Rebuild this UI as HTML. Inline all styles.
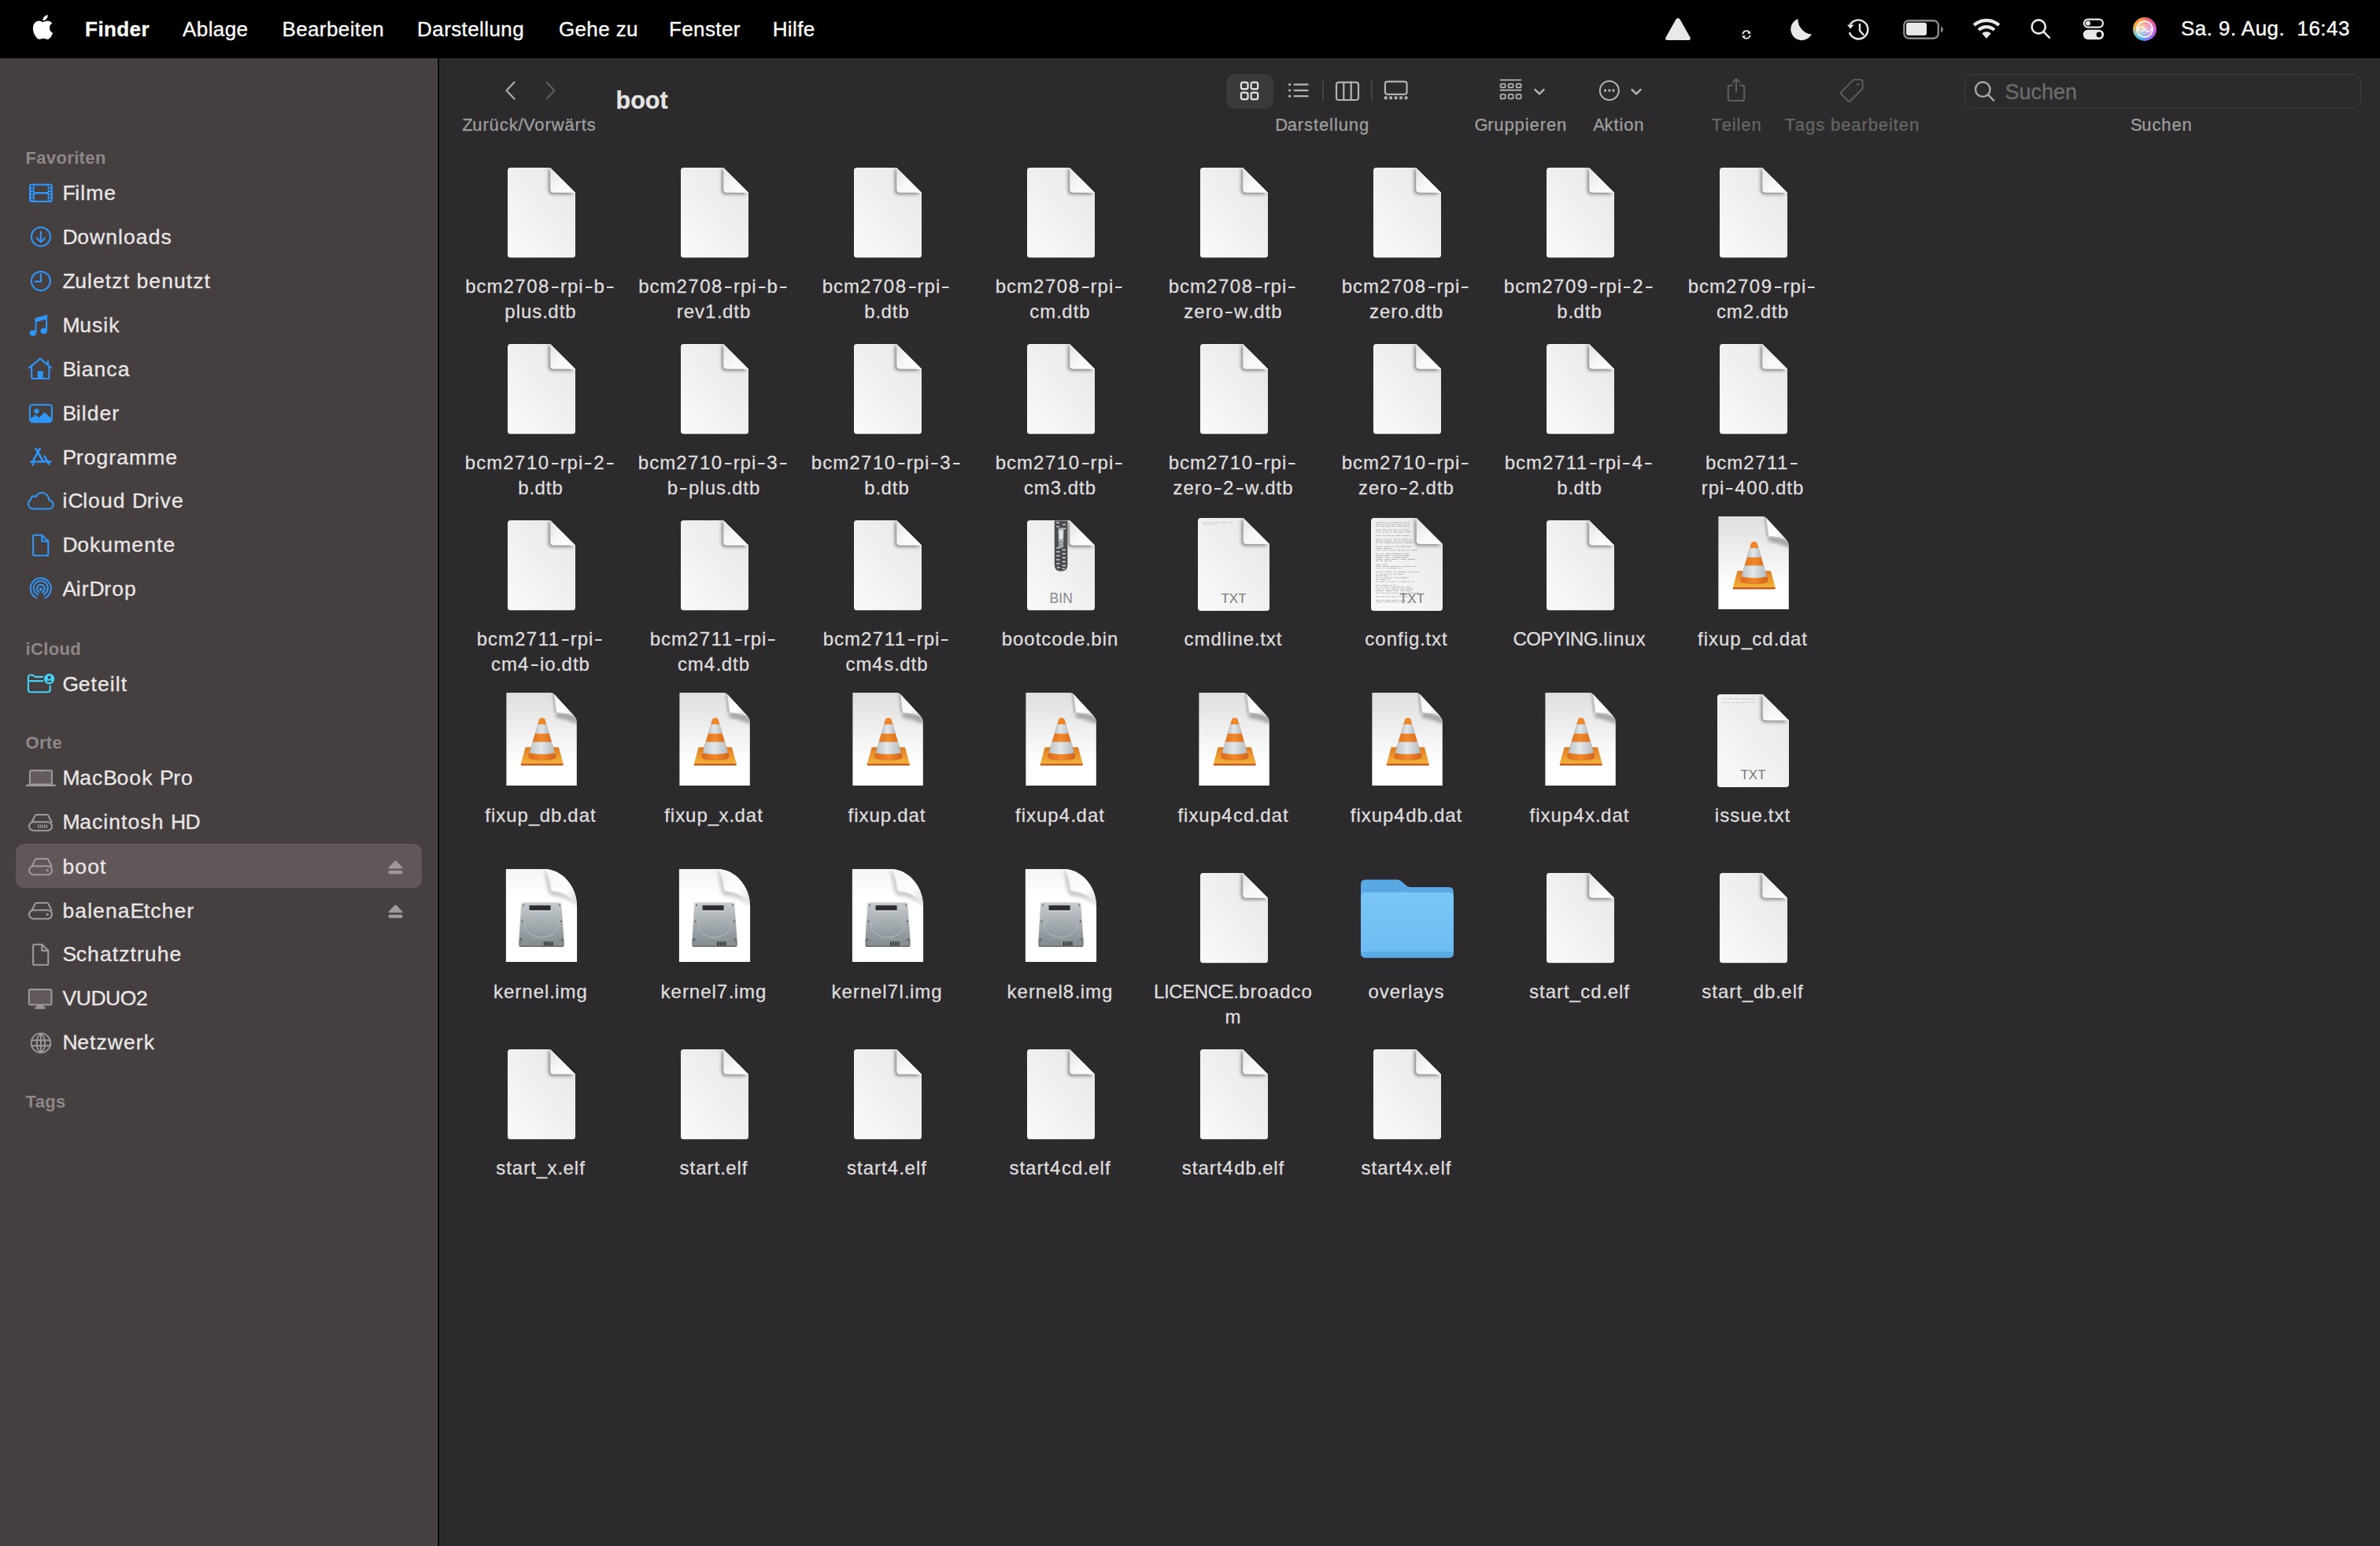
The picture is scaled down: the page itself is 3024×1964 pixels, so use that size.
<!DOCTYPE html>
<html><head><meta charset="utf-8"><title>Finder</title>
<style>
html,body{margin:0;padding:0}
body{width:3024px;height:1964px;overflow:hidden;position:relative;background:#2d2a2d;font-family:"Liberation Sans",sans-serif}
.t{position:absolute;white-space:nowrap;line-height:1;-webkit-text-stroke:0.3px currentColor}
.i{position:absolute;overflow:visible}
.hy{display:inline-block;width:13px;height:12px;vertical-align:baseline;background:linear-gradient(currentColor,currentColor) no-repeat;background-size:8.6px 2.3px;background-position:2.1px 4.1px}
</style></head><body>
<div style="position:absolute;left:0;top:0;width:3024px;height:74px;background:#000"></div>
<svg class="i" style="left:39px;top:19px;" width="31" height="31" viewBox="0 0 24 24"><path fill="#fff" d="M12.152 6.896c-.948 0-2.415-1.078-3.96-1.04-2.04.027-3.91 1.183-4.961 3.014-2.117 3.675-.546 9.103 1.519 12.09 1.013 1.454 2.208 3.09 3.792 3.039 1.52-.065 2.09-.987 3.935-.987 1.831 0 2.35.987 3.96.948 1.637-.026 2.676-1.48 3.676-2.948 1.156-1.688 1.636-3.325 1.662-3.415-.039-.013-3.182-1.221-3.22-4.857-.026-3.04 2.48-4.494 2.597-4.559-1.429-2.09-3.623-2.324-4.39-2.376-2-.156-3.675 1.09-4.61 1.09zM15.53 3.83c.843-1.012 1.4-2.427 1.245-3.83-1.207.052-2.662.805-3.532 1.818-.78.896-1.454 2.338-1.273 3.714 1.338.104 2.715-.688 3.559-1.701"/></svg>
<div class="t" style="left:108.1px;top:23.7px;font-size:26px;color:#ffffff;font-weight:700;letter-spacing:0.4px;">Finder</div>
<div class="t" style="left:232.1px;top:23.7px;font-size:26px;color:#ffffff;letter-spacing:0.4px;">Ablage</div>
<div class="t" style="left:358.4px;top:23.7px;font-size:26px;color:#ffffff;letter-spacing:0.4px;">Bearbeiten</div>
<div class="t" style="left:530.1px;top:23.7px;font-size:26px;color:#ffffff;letter-spacing:0.4px;">Darstellung</div>
<div class="t" style="left:709.9px;top:23.7px;font-size:26px;color:#ffffff;letter-spacing:0.4px;">Gehe zu</div>
<div class="t" style="left:849.9px;top:23.7px;font-size:26px;color:#ffffff;letter-spacing:0.4px;">Fenster</div>
<div class="t" style="left:981.7px;top:23.7px;font-size:26px;color:#ffffff;letter-spacing:0.4px;">Hilfe</div>
<svg class="i" style="left:2112px;top:20px;" width="40" height="34" viewBox="0 0 40 34"><path fill="#e8e8e8" d="M20 3 Q21.5 3 22.5 4.6 L35.5 27.5 Q36.8 30.8 33.5 31 L6.5 31 Q3.2 30.8 4.5 27.5 L17.5 4.6 Q18.5 3 20 3Z"/></svg>
<svg class="i" style="left:2212px;top:37px;" width="14" height="14" viewBox="0 0 14 14"><g fill="none" stroke="#e8e8e8" stroke-width="1.8"><path d="M2.2 6.5 A5 5 0 0 1 11 4"/><path d="M11.8 7.5 A5 5 0 0 1 3 10"/></g><path fill="#e8e8e8" d="M9.5 1.5 L13 5.5 L8.5 6Z M4.5 12.5 L1 8.5 L5.5 8Z"/></svg>
<svg class="i" style="left:2272px;top:22px;" width="32" height="32" viewBox="0 0 32 32"><path fill="#e8e8e8" d="M12.5 2 A14 14 0 1 0 29.8 21.5 A19 19 0 0 1 12.5 2Z"/></svg>
<svg class="i" style="left:2345px;top:22px;" width="34" height="32" viewBox="0 0 34 32"><g fill="none" stroke="#e8e8e8" stroke-width="2.4" stroke-linecap="round"><path d="M5.6 10 A12 12 0 1 1 5.2 20"/><path d="M18 9 V17 L22.5 22"/></g><path fill="#e8e8e8" d="M2 9.5 L10.5 9.5 L6.2 14.5Z"/></svg>
<svg class="i" style="left:2416px;top:23px;" width="56" height="28" viewBox="0 0 56 28"><rect x="3.3" y="3.2" width="43.5" height="22.5" rx="6" fill="none" stroke="#8a8a8a" stroke-width="2.4"/><rect x="6" y="5.8" width="26" height="16.2" rx="3" fill="#e8e8e8"/><path d="M50 10.5 Q53 12 53 14.5 Q53 17 50 18.5Z" fill="#8a8a8a"/></svg>
<svg class="i" style="left:2504px;top:22px;" width="40" height="30" viewBox="0 0 40 30"><g fill="#e8e8e8"><path d="M20 1.8 C27 1.8 33 4.6 37.3 8.6 L34.4 11.6 C30.7 8.2 25.6 6 20 6 C14.4 6 9.3 8.2 5.6 11.6 L2.7 8.6 C7 4.6 13 1.8 20 1.8Z"/><path d="M20 10 C24.6 10 28.6 11.8 31.4 14.6 L28.5 17.6 C26.3 15.5 23.3 14.2 20 14.2 C16.7 14.2 13.7 15.5 11.5 17.6 L8.6 14.6 C11.4 11.8 15.4 10 20 10Z"/><path d="M20 18.2 C22.3 18.2 24.2 19.1 25.6 20.5 L20 27 L14.4 20.5 C15.8 19.1 17.7 18.2 20 18.2Z"/></g></svg>
<svg class="i" style="left:2578px;top:22px;" width="30" height="29" viewBox="0 0 30 29"><g fill="none" stroke="#e8e8e8" stroke-width="2.6" stroke-linecap="round"><circle cx="12.2" cy="12" r="8.6"/><path d="M18.6 18.4 L26 25.8"/></g></svg>
<svg class="i" style="left:2645px;top:22px;" width="30" height="30" viewBox="0 0 30 30"><rect x="3" y="2.6" width="24" height="10" rx="5" fill="none" stroke="#e8e8e8" stroke-width="2.2"/><circle cx="8" cy="7.6" r="3" fill="#e8e8e8"/><rect x="1.8" y="15.8" width="26.4" height="12.4" rx="6.2" fill="#e8e8e8"/><circle cx="22" cy="22" r="3.4" fill="#000"/></svg>
<div style="position:absolute;left:2709.8px;top:21.8px;width:30.2px;height:30.2px;border-radius:50%;background:conic-gradient(from 20deg,#ee5d74,#d65ad6 70deg,#8a6cf0 130deg,#3db3f3 185deg,#7fc8c8 220deg,#f2ac3c 270deg,#f39a4a 320deg,#ee5d74)"></div>
<svg class="i" style="left:2709.8px;top:21.8px;" width="30.2" height="30.2" viewBox="0 0 30.2 30.2"><defs><radialGradient id="sg2" cx="0.5" cy="0.5" r="0.5"><stop offset="0" stop-color="#fbe9e6" stop-opacity="0.75"/><stop offset="0.7" stop-color="#f6d8d8" stop-opacity="0.45"/><stop offset="1" stop-color="#fff" stop-opacity="0"/></radialGradient></defs><circle cx="15.1" cy="15.1" r="12.5" fill="url(#sg2)"/><circle cx="15.1" cy="15.1" r="10" fill="none" stroke="#fff" stroke-width="1.5"/><path d="M5.6 16.5 C9 10.5 12 11 15.1 15.1 C18.2 19.2 21.2 19.7 24.6 13.5" fill="none" stroke="#fff" stroke-width="1.5"/><path d="M5.6 14 C9 19 12 18.5 15.1 15.1" fill="none" stroke="#fff" stroke-width="1.1" opacity=".8"/></svg>
<div class="t" style="left:2771.0px;top:23.2px;font-size:26px;color:#ffffff;letter-spacing:0.45px;">Sa. 9. Aug.&nbsp;&nbsp;16:43</div>
<div style="position:absolute;left:0;top:74px;width:556px;height:1890px;background:#463f40"></div>
<div style="position:absolute;left:555px;top:74px;width:1px;height:1890px;background:#4e4748"></div>
<div style="position:absolute;left:556px;top:74px;width:2px;height:1890px;background:#000"></div>
<div style="position:absolute;left:20px;top:1072px;width:516px;height:56px;border-radius:10px;background:#615758"></div>
<div class="t" style="left:32.5px;top:189.6px;font-size:22px;color:#8e8788;font-weight:700;letter-spacing:0.35px;-webkit-text-stroke:0;">Favoriten</div>
<div class="t" style="left:32.5px;top:813.8px;font-size:22px;color:#8e8788;font-weight:700;letter-spacing:0.35px;-webkit-text-stroke:0;">iCloud</div>
<div class="t" style="left:32.5px;top:933.3px;font-size:22px;color:#8e8788;font-weight:700;letter-spacing:0.35px;-webkit-text-stroke:0;">Orte</div>
<div class="t" style="left:32.5px;top:1388.9px;font-size:22px;color:#8e8788;font-weight:700;letter-spacing:0.35px;-webkit-text-stroke:0;">Tags</div>
<div class="t" style="left:79.5px;top:232.0px;font-size:26.5px;color:#e9e7e7;"><span style="letter-spacing:-0.45px">F</span><span style="letter-spacing:1.08px">ilm</span><span style="letter-spacing:0.0px">e</span></div>
<div class="t" style="left:79.5px;top:287.8px;font-size:26.5px;color:#e9e7e7;"><span style="letter-spacing:-0.45px">D</span><span style="letter-spacing:1.08px">ownload</span><span style="letter-spacing:0.0px">s</span></div>
<div class="t" style="left:79.5px;top:343.6px;font-size:26.5px;color:#e9e7e7;"><span style="letter-spacing:-0.45px">Z</span><span style="letter-spacing:1.08px">uletzt benutz</span><span style="letter-spacing:0.0px">t</span></div>
<div class="t" style="left:79.5px;top:399.6px;font-size:26.5px;color:#e9e7e7;"><span style="letter-spacing:-0.45px">M</span><span style="letter-spacing:1.08px">usi</span><span style="letter-spacing:0.0px">k</span></div>
<div class="t" style="left:79.5px;top:456.0px;font-size:26.5px;color:#e9e7e7;"><span style="letter-spacing:-0.45px">B</span><span style="letter-spacing:1.08px">ianc</span><span style="letter-spacing:0.0px">a</span></div>
<div class="t" style="left:79.5px;top:511.8px;font-size:26.5px;color:#e9e7e7;"><span style="letter-spacing:-0.45px">B</span><span style="letter-spacing:1.08px">ilde</span><span style="letter-spacing:0.0px">r</span></div>
<div class="t" style="left:79.5px;top:567.8px;font-size:26.5px;color:#e9e7e7;"><span style="letter-spacing:-0.45px">P</span><span style="letter-spacing:1.08px">rogramm</span><span style="letter-spacing:0.0px">e</span></div>
<div class="t" style="left:79.5px;top:623.4px;font-size:26.5px;color:#e9e7e7;"><span style="letter-spacing:1.08px">i</span><span style="letter-spacing:-0.45px">C</span><span style="letter-spacing:1.08px">loud </span><span style="letter-spacing:-0.45px">D</span><span style="letter-spacing:1.08px">riv</span><span style="letter-spacing:0.0px">e</span></div>
<div class="t" style="left:79.5px;top:679.4px;font-size:26.5px;color:#e9e7e7;"><span style="letter-spacing:-0.45px">D</span><span style="letter-spacing:1.08px">okument</span><span style="letter-spacing:0.0px">e</span></div>
<div class="t" style="left:79.5px;top:735.4px;font-size:26.5px;color:#e9e7e7;"><span style="letter-spacing:-0.45px">A</span><span style="letter-spacing:1.08px">ir</span><span style="letter-spacing:-0.45px">D</span><span style="letter-spacing:1.08px">ro</span><span style="letter-spacing:0.0px">p</span></div>
<div class="t" style="left:79.5px;top:855.8px;font-size:26.5px;color:#e9e7e7;"><span style="letter-spacing:-0.45px">G</span><span style="letter-spacing:1.08px">eteil</span><span style="letter-spacing:0.0px">t</span></div>
<div class="t" style="left:79.5px;top:975.4px;font-size:26.5px;color:#e9e7e7;"><span style="letter-spacing:-0.45px">M</span><span style="letter-spacing:1.08px">ac</span><span style="letter-spacing:-0.45px">B</span><span style="letter-spacing:1.08px">ook </span><span style="letter-spacing:-0.45px">P</span><span style="letter-spacing:1.08px">r</span><span style="letter-spacing:0.0px">o</span></div>
<div class="t" style="left:79.5px;top:1031.2px;font-size:26.5px;color:#e9e7e7;"><span style="letter-spacing:-0.45px">M</span><span style="letter-spacing:1.08px">acintosh </span><span style="letter-spacing:-0.45px">H</span><span style="letter-spacing:0.0px">D</span></div>
<div class="t" style="left:79.5px;top:1087.6px;font-size:26.5px;color:#e9e7e7;"><span style="letter-spacing:1.08px">boo</span><span style="letter-spacing:0.0px">t</span></div>
<div class="t" style="left:79.5px;top:1143.6px;font-size:26.5px;color:#e9e7e7;"><span style="letter-spacing:1.08px">balena</span><span style="letter-spacing:-0.45px">E</span><span style="letter-spacing:1.08px">tche</span><span style="letter-spacing:0.0px">r</span></div>
<div class="t" style="left:79.5px;top:1199.4px;font-size:26.5px;color:#e9e7e7;"><span style="letter-spacing:-0.45px">S</span><span style="letter-spacing:1.08px">chatztruh</span><span style="letter-spacing:0.0px">e</span></div>
<div class="t" style="left:79.5px;top:1255.2px;font-size:26.5px;color:#e9e7e7;"><span style="letter-spacing:-0.45px">VUDUO</span><span style="letter-spacing:0.0px">2</span></div>
<div class="t" style="left:79.5px;top:1311.2px;font-size:26.5px;color:#e9e7e7;"><span style="letter-spacing:-0.45px">N</span><span style="letter-spacing:1.08px">etzwer</span><span style="letter-spacing:0.0px">k</span></div>
<svg class="i" style="left:34px;top:230px;" width="36" height="30" viewBox="0 0 36 30"><rect x="3" y="3.5" width="29.9" height="23.5" rx="3" fill="#2f95f7"/><g fill="#463f40"><rect x="9.7" y="5.7" width="17" height="8.3"/><rect x="9.7" y="16.5" width="17" height="8.4"/><rect x="5.3" y="5.6" width="2.8" height="2.4" rx=".5"/><rect x="27.9" y="5.6" width="2.8" height="2.4" rx=".5"/><rect x="5.3" y="9.6" width="2.8" height="2.4" rx=".5"/><rect x="27.9" y="9.6" width="2.8" height="2.4" rx=".5"/><rect x="5.3" y="13.9" width="2.8" height="2.4" rx=".5"/><rect x="27.9" y="13.9" width="2.8" height="2.4" rx=".5"/><rect x="5.3" y="18.2" width="2.8" height="2.4" rx=".5"/><rect x="27.9" y="18.2" width="2.8" height="2.4" rx=".5"/><rect x="5.3" y="22.2" width="2.8" height="2.4" rx=".5"/><rect x="27.9" y="22.2" width="2.8" height="2.4" rx=".5"/></g></svg>
<svg class="i" style="left:36px;top:285px;" width="32" height="32" viewBox="0 0 32 32"><g fill="none" stroke-width="2.1" stroke-linecap="round" stroke-linejoin="round" stroke="#2f95f7"><circle cx="15.9" cy="15.8" r="12"/><path d="M15.9 9.6V22.4 M10.9 17.6 L15.9 22.4 L20.9 17.6"/></g></svg>
<svg class="i" style="left:36px;top:341px;" width="32" height="32" viewBox="0 0 32 32"><g fill="none" stroke-width="2.1" stroke-linecap="round" stroke-linejoin="round" stroke="#2f95f7"><circle cx="15.9" cy="16.1" r="12"/><path d="M16 7.4V16.6H8.6"/></g></svg>
<svg class="i" style="left:34px;top:396px;" width="30" height="34" viewBox="0 0 30 34"><g fill="#2f95f7"><path d="M10.5 8 L26.1 3.7 V24 H24.1 V9.8 L12.5 13 V27 H10.5Z"/><ellipse cx="7.8" cy="27.1" rx="4.2" ry="3.6"/><ellipse cx="21.7" cy="24.4" rx="4.2" ry="3.6"/></g></svg>
<svg class="i" style="left:33px;top:452px;" width="36" height="32" viewBox="0 0 36 32"><g fill="none" stroke-width="2.1" stroke-linecap="round" stroke-linejoin="round" stroke="#2f95f7"><path d="M4 15.4 L18.1 3.6 L32.1 15.4"/><path d="M7.2 13.5 V27.4 Q7.2 29 8.8 29 H27.8 Q29.4 29 29.4 27.4 V13.5"/><path d="M28 6.8 V11.5"/></g><rect x="14.6" y="19.4" width="7.2" height="9.6" fill="#2f95f7"/></svg>
<svg class="i" style="left:34px;top:510px;" width="36" height="30" viewBox="0 0 36 30"><rect x="3.9" y="4.3" width="28" height="21.8" rx="3.5" fill="none" stroke-width="2.1" stroke-linecap="round" stroke-linejoin="round" stroke="#2f95f7"/><circle cx="12.5" cy="12.3" r="3.1" fill="#2f95f7"/><path d="M3.9 23 L11 16.8 L15.5 20.5 L22.5 13.8 L32 22 V24 Q32 27 29 27 H7 Q3.9 27 3.9 24Z" fill="#2f95f7"/></svg>
<svg class="i" style="left:34px;top:565px;" width="34" height="30" viewBox="0 0 34 30"><g fill="none" stroke="#2f95f7" stroke-width="2.6" stroke-linecap="round"><path d="M11.5 5 L21 21.5 M13 21.5 L25 21.5 M16.8 5 L8.5 19.3 M5.4 21.6 H10.8 M7.6 25.6 L8.4 24.3 M22.5 14.5 L28 24.6 M24.5 21.5 H30.4"/></g></svg>
<svg class="i" style="left:34px;top:622px;" width="36" height="28" viewBox="0 0 36 28"><path fill="none" stroke-width="2.1" stroke-linecap="round" stroke-linejoin="round" stroke="#2f95f7" d="M9.5 24.5 H28 C31.8 24.5 33.5 21.8 33.5 19 C33.5 15.9 31.2 13.8 28.6 13.6 C28.1 8 24.1 4 19.2 4 C15.6 4 12.9 6.1 11.7 9 C10.8 8.5 10 8.4 9.3 8.4 C6.8 8.4 5 10.5 5 13 C2.7 13.9 2 16.4 2 18.6 C2 21.8 4.6 24.5 9.5 24.5Z"/></svg>
<svg class="i" style="left:38px;top:676px;" width="28" height="34" viewBox="0 0 28 34"><g fill="none" stroke-width="2.1" stroke-linecap="round" stroke-linejoin="round" stroke="#2f95f7"><path d="M6 3.8 H15.3 L23.3 11.8 V27.9 Q23.3 29.8 21.4 29.8 H6 Q4.1 29.8 4.1 27.9 V5.7 Q4.1 3.8 6 3.8Z"/><path d="M15.3 3.8 V11.8 H23.3"/></g></svg>
<svg class="i" style="left:36px;top:733px;" width="32" height="32" viewBox="0 0 32 32"><g fill="none" stroke="#2f95f7" stroke-width="2" stroke-linecap="round"><path d="M10.4 26.4 A13 13 0 1 1 21.2 26.4"/><path d="M12.3 22.3 A9 9 0 1 1 19.3 22.3"/><path d="M13.7 19.4 A5 5 0 1 1 17.9 19.4"/></g><circle cx="15.8" cy="15.7" r="2" fill="#2f95f7"/></svg>
<svg class="i" style="left:32px;top:852px;" width="40" height="32" viewBox="0 0 40 32"><g fill="none" stroke-width="2.1" stroke-linecap="round" stroke-linejoin="round" stroke="#45d0f5"><path d="M26 7.9 H13.8 Q12.6 7.9 11.7 7.1 L10.6 6.2 Q9.8 5.5 8.6 5.5 H6.9 Q3.9 5.5 3.9 8.5 V24.3 Q3.9 27.3 6.9 27.3 H28.7 Q31.7 27.3 31.7 24.3 V17.5"/><path d="M4 13.1 H26"/></g><circle cx="30.6" cy="10.5" r="8.2" fill="#463f40"/><circle cx="30.6" cy="10.5" r="6.7" fill="#45d0f5"/><ellipse cx="30.6" cy="8.6" rx="1.9" ry="2.1" fill="#463f40"/><path d="M26.8 13.6 Q30.6 11.3 34.4 13.6 Q32.8 14.8 30.6 14.8 Q28.4 14.8 26.8 13.6Z" fill="#463f40"/></svg>
<svg class="i" style="left:31px;top:975px;" width="42" height="28" viewBox="0 0 42 28"><rect x="6.9" y="3.8" width="28" height="17.6" rx="1.6" fill="#625a5b" stroke="#9f999a" stroke-width="2"/><path d="M18.5 3.8 H23.3 V5.3 H18.5Z" fill="#9f999a"/><rect x="2" y="21.4" width="37.8" height="2.6" rx="1.3" fill="#9f999a"/></svg>
<svg class="i" style="left:34px;top:1031.5px;" width="36" height="27" viewBox="0 0 36 27"><g fill="none" stroke-width="2.1" stroke-linecap="round" stroke-linejoin="round" stroke="#9f999a"><path d="M6.5 12.2 L10.6 4.2 Q11.2 3 12.6 3 H25.4 Q26.8 3 27.4 4.2 L31.5 12.2"/><rect x="3" y="12.2" width="29" height="11" rx="5.5"/></g><g stroke="#9f999a" stroke-width="1.4"><path d="M15 15.5V20 M17.6 15.5V20 M20.2 15.5V20 M22.8 15.5V20 M25.4 15.5V20"/></g></svg>
<svg class="i" style="left:34px;top:1087.6px;" width="36" height="27" viewBox="0 0 36 27"><g fill="none" stroke-width="2.1" stroke-linecap="round" stroke-linejoin="round" stroke="#9f999a"><path d="M6.5 12.2 L10.6 4.2 Q11.2 3 12.6 3 H25.4 Q26.8 3 27.4 4.2 L31.5 12.2"/><rect x="3" y="12.2" width="29" height="11" rx="5.5"/></g><circle cx="26.2" cy="17.7" r="1.6" fill="#9f999a"/></svg>
<svg class="i" style="left:34px;top:1143.6px;" width="36" height="27" viewBox="0 0 36 27"><g fill="none" stroke-width="2.1" stroke-linecap="round" stroke-linejoin="round" stroke="#9f999a"><path d="M6.5 12.2 L10.6 4.2 Q11.2 3 12.6 3 H25.4 Q26.8 3 27.4 4.2 L31.5 12.2"/><rect x="3" y="12.2" width="29" height="11" rx="5.5"/></g><circle cx="26.2" cy="17.7" r="1.6" fill="#9f999a"/></svg>
<svg class="i" style="left:493px;top:1092px;" width="19" height="19" viewBox="0 0 19 19"><path d="M9.5 1.5 Q10.3 1.5 11 2.3 L18.4 10.2 Q19 11.2 18 11.4 H1 Q0 11.2 0.6 10.2 L8 2.3 Q8.7 1.5 9.5 1.5Z" fill="#9f999a"/><rect x="0.6" y="14" width="17.8" height="4.2" rx="1.4" fill="#9f999a"/></svg>
<svg class="i" style="left:493px;top:1148px;" width="19" height="19" viewBox="0 0 19 19"><path d="M9.5 1.5 Q10.3 1.5 11 2.3 L18.4 10.2 Q19 11.2 18 11.4 H1 Q0 11.2 0.6 10.2 L8 2.3 Q8.7 1.5 9.5 1.5Z" fill="#9f999a"/><rect x="0.6" y="14" width="17.8" height="4.2" rx="1.4" fill="#9f999a"/></svg>
<svg class="i" style="left:38px;top:1196px;" width="28" height="34" viewBox="0 0 28 34"><g fill="none" stroke-width="2.1" stroke-linecap="round" stroke-linejoin="round" stroke="#9f999a" stroke-width="1.8"><path d="M6 3.8 H15.3 L23.3 11.8 V27.9 Q23.3 29.8 21.4 29.8 H6 Q4.1 29.8 4.1 27.9 V5.7 Q4.1 3.8 6 3.8Z"/><path d="M15.3 3.8 V11.8 H23.3"/></g></svg>
<svg class="i" style="left:33px;top:1253px;" width="36" height="32" viewBox="0 0 36 32"><rect x="3.8" y="4" width="28.7" height="19.6" rx="2" fill="#625a5b" stroke="#9f999a" stroke-width="2"/><rect x="13.5" y="23.6" width="9" height="3" fill="#9f999a"/><rect x="11" y="26.2" width="14" height="2.6" rx="1" fill="#9f999a"/></svg>
<svg class="i" style="left:36px;top:1309px;" width="32" height="32" viewBox="0 0 32 32"><g fill="none" stroke="#9f999a" stroke-width="1.8"><circle cx="15.9" cy="16" r="12.3"/><path d="M4 12.5 H27.8 M4 19.5 H27.8"/><path d="M15.9 3.7 C9 9 9 23 15.9 28.3 M15.9 3.7 C22.8 9 22.8 23 15.9 28.3 M15.9 3.7 V28.3"/></g></svg>
<svg class="i" style="left:636px;top:100px;" width="24" height="30" viewBox="0 0 24 30"><path d="M17.5 4.5 L7.5 15 L17.5 25.5" fill="none" stroke="#a9a8a9" stroke-width="2.4" stroke-linecap="round" stroke-linejoin="round"/></svg>
<svg class="i" style="left:688px;top:100px;" width="24" height="30" viewBox="0 0 24 30"><path d="M6.5 4.5 L16.5 15 L6.5 25.5" fill="none" stroke="#5c5b5c" stroke-width="2.4" stroke-linecap="round" stroke-linejoin="round"/></svg>
<div class="t" style="left:782.5px;top:111.6px;font-size:30.5px;color:#e6e5e6;font-weight:700;">boot</div>
<div class="t" style="left:587.2px;top:147.7px;font-size:22px;color:#9f9e9f;"><span style="letter-spacing:-0.38px">Z</span><span style="letter-spacing:0.9px">urück</span><span style="letter-spacing:0.31px">/</span><span style="letter-spacing:-0.38px">V</span><span style="letter-spacing:0.9px">orwärt</span><span style="letter-spacing:0.0px">s</span></div>
<div style="position:absolute;left:1558px;top:94px;width:60px;height:44px;border-radius:11px;background:#3b3a3b"></div>
<svg class="i" style="left:1574px;top:102px;" width="27" height="27" viewBox="0 0 27 27"><g fill="none" stroke-width="2.2" stroke-linejoin="round" stroke-linecap="round" stroke="#e4e3e4"><rect x="2.9" y="2.6" width="8.6" height="8.6" rx="2.2"/><rect x="15.6" y="2.6" width="8.6" height="8.6" rx="2.2"/><rect x="2.9" y="15.6" width="8.6" height="8.6" rx="2.2"/><rect x="15.6" y="15.6" width="8.6" height="8.6" rx="2.2"/></g></svg>
<svg class="i" style="left:1635px;top:103px;" width="30" height="24" viewBox="0 0 30 24"><g fill="#b4b3b4"><circle cx="3.6" cy="4.4" r="1.6"/><circle cx="3.6" cy="11.8" r="1.6"/><circle cx="3.6" cy="19.2" r="1.6"/></g><g stroke="#b4b3b4" stroke-width="2.2" stroke-linecap="round"><path d="M9.6 4.4H26.6 M9.6 11.8H26.6 M9.6 19.2H26.6"/></g></svg>
<div style="position:absolute;left:1680px;top:102px;width:2px;height:27px;background:#444344"></div>
<svg class="i" style="left:1695px;top:102px;" width="34" height="27" viewBox="0 0 34 27"><g fill="none" stroke-width="2.2" stroke-linejoin="round" stroke-linecap="round" stroke="#b4b3b4"><rect x="3" y="2.6" width="28" height="22.4" rx="3"/><path d="M12.3 2.6V25 M21.7 2.6V25"/></g></svg>
<div style="position:absolute;left:1742px;top:102px;width:2px;height:27px;background:#444344"></div>
<svg class="i" style="left:1757px;top:101px;" width="34" height="27" viewBox="0 0 34 27"><rect x="2.9" y="2.6" width="27.6" height="16.2" rx="3" fill="none" stroke-width="2.2" stroke-linejoin="round" stroke-linecap="round" stroke="#b4b3b4"/><g fill="#b4b3b4"><rect x="1.8" y="21.4" width="3.8" height="3.8"/><rect x="8.2" y="21.4" width="3.8" height="3.8"/><rect x="14.7" y="21.4" width="3.8" height="3.8"/><rect x="21.1" y="21.4" width="3.8" height="3.8"/><rect x="27.6" y="21.4" width="3.8" height="3.8"/></g></svg>
<div class="t" style="left:1620.2px;top:147.8px;font-size:22px;color:#9f9e9f;"><span style="letter-spacing:-0.38px">D</span><span style="letter-spacing:0.9px">arstellun</span><span style="letter-spacing:0.0px">g</span></div>
<svg class="i" style="left:1904px;top:99px;" width="31" height="31" viewBox="0 0 31 31"><g stroke="#b4b3b4" stroke-width="1.8" fill="none" stroke-linecap="round"><path d="M2.6 2.6H28.6 M2.6 15.5H28.6"/><rect x="2.6" y="7.6" width="6" height="4.6" rx="1.3"/><rect x="12.6" y="7.6" width="6" height="4.6" rx="1.3"/><rect x="22.6" y="7.6" width="6" height="4.6" rx="1.3"/><rect x="2.6" y="20.8" width="6" height="5.6" rx="1.3"/><rect x="12.6" y="20.8" width="6" height="5.6" rx="1.3"/><rect x="22.6" y="20.8" width="6" height="5.6" rx="1.3"/></g></svg>
<svg class="i" style="left:1948px;top:111px;" width="16" height="11" viewBox="0 0 16 11"><path d="M2.5 2.8 L8 8.3 L13.5 2.8" fill="none" stroke="#b4b3b4" stroke-width="2.4" stroke-linecap="round" stroke-linejoin="round"/></svg>
<div class="t" style="left:1873.4px;top:147.8px;font-size:22px;color:#9f9e9f;"><span style="letter-spacing:-0.38px">G</span><span style="letter-spacing:0.9px">ruppiere</span><span style="letter-spacing:0.0px">n</span></div>
<svg class="i" style="left:2030px;top:100px;" width="30" height="30" viewBox="0 0 30 30"><circle cx="14.8" cy="15" r="12" fill="none" stroke="#b4b3b4" stroke-width="2"/><g fill="#b4b3b4"><circle cx="9.6" cy="15" r="1.7"/><circle cx="14.8" cy="15" r="1.7"/><circle cx="20" cy="15" r="1.7"/></g></svg>
<svg class="i" style="left:2071px;top:111px;" width="16" height="11" viewBox="0 0 16 11"><path d="M2.5 2.8 L8 8.3 L13.5 2.8" fill="none" stroke="#b4b3b4" stroke-width="2.4" stroke-linecap="round" stroke-linejoin="round"/></svg>
<div class="t" style="left:2024.2px;top:147.8px;font-size:22px;color:#9f9e9f;"><span style="letter-spacing:-0.38px">A</span><span style="letter-spacing:0.9px">ktio</span><span style="letter-spacing:0.0px">n</span></div>
<svg class="i" style="left:2192px;top:97px;" width="28" height="34" viewBox="0 0 28 34"><g fill="none" stroke="#5f5e5f" stroke-width="2" stroke-linecap="round" stroke-linejoin="round"><path d="M9 11.5H6 Q3.8 11.5 3.8 13.7V28.8 Q3.8 31 6 31H22 Q24.2 31 24.2 28.8V13.7 Q24.2 11.5 22 11.5H19"/><path d="M14 20V3.5 M9.6 7.6 L14 3.3 L18.4 7.6"/></g></svg>
<div class="t" style="left:2174.6px;top:147.8px;font-size:22px;color:#666566;"><span style="letter-spacing:-0.38px">T</span><span style="letter-spacing:0.9px">eile</span><span style="letter-spacing:0.0px">n</span></div>
<svg class="i" style="left:2336px;top:98px;" width="34" height="34" viewBox="0 0 34 34"><g fill="none" stroke="#5f5e5f" stroke-width="2" stroke-linejoin="round"><path d="M20.5 3.2 H28 Q30.6 3.2 30.6 5.8 V13.3 Q30.6 14.5 29.7 15.4 L15.4 29.7 Q13.6 31.5 11.8 29.7 L4.1 22 Q2.3 20.2 4.1 18.4 L18.4 4.1 Q19.3 3.2 20.5 3.2Z"/></g><circle cx="24.8" cy="9.1" r="1.7" fill="#5f5e5f"/></svg>
<div class="t" style="left:2267.8px;top:147.8px;font-size:22px;color:#666566;"><span style="letter-spacing:-0.38px">T</span><span style="letter-spacing:0.9px">ags bearbeite</span><span style="letter-spacing:0.0px">n</span></div>
<div style="position:absolute;left:2495.5px;top:94.2px;width:504px;height:43.4px;box-sizing:border-box;border:1.5px solid #403f40;border-radius:11px"></div>
<svg class="i" style="left:2507px;top:101px;" width="30" height="30" viewBox="0 0 30 30"><g fill="none" stroke="#a9a8a9" stroke-width="2.4" stroke-linecap="round"><circle cx="12.3" cy="12.6" r="9.3"/><path d="M19.2 19.6 L26.2 26.6"/></g></svg>
<div class="t" style="left:2547.4px;top:103.5px;font-size:27px;color:#6d6c6d;">Suchen</div>
<div class="t" style="left:2707.0px;top:147.7px;font-size:22px;color:#9f9e9f;"><span style="letter-spacing:-0.38px">S</span><span style="letter-spacing:0.9px">uche</span><span style="letter-spacing:0.0px">n</span></div>
<svg width="0" height="0" style="position:absolute">
<defs>
<linearGradient id="gDoc" x1="1" y1="0" x2="0" y2="1"><stop offset="0" stop-color="#e6e6e6"/><stop offset="1" stop-color="#fafafa"/></linearGradient>
<linearGradient id="gFold" x1="0" y1="0" x2="1" y2="1"><stop offset="0" stop-color="#e2e2e2"/><stop offset="0.5" stop-color="#f7f7f7"/><stop offset="1" stop-color="#ffffff"/></linearGradient>
<linearGradient id="gPage" x1="0" y1="0" x2="0" y2="1"><stop offset="0" stop-color="#dedede"/><stop offset="0.75" stop-color="#ffffff"/><stop offset="1" stop-color="#ffffff"/></linearGradient>
<linearGradient id="gPage2" x1="0" y1="0" x2="0" y2="1"><stop offset="0" stop-color="#f4f4f4"/><stop offset="0.3" stop-color="#ffffff"/></linearGradient>
<linearGradient id="gCurl" x1="0" y1="0" x2="1" y2="1"><stop offset="0" stop-color="#f2f2f2"/><stop offset="0.6" stop-color="#ffffff"/><stop offset="1" stop-color="#d6d6d6"/></linearGradient>
<filter id="fSh" x="-50%" y="-50%" width="200%" height="200%"><feGaussianBlur stdDeviation="2.2"/></filter>
<filter id="fSh2" x="-50%" y="-50%" width="200%" height="200%"><feGaussianBlur stdDeviation="1.2"/></filter>
<clipPath id="cVlc"><path d="M19.4 1.9 H75.5 Q78.4 1.9 80.2 3.9 L105.6 31.4 Q108.8 34.8 108.8 38.5 V120.1 H19.4Z"/></clipPath>
<clipPath id="cDoc"><path d="M24.5 6.9 H75.2 L107 38.7 V117.8 Q107 121.3 103.5 121.3 H24.5 Q21 121.3 21 117.8 V10.4 Q21 6.9 24.5 6.9Z"/></clipPath>
<clipPath id="cTxt"><path d="M21.8 3.9 H75.7 L109 37.2 V118.2 Q109 122 105.2 122 H21.8 Q18 122 18 118.2 V7.7 Q18 3.9 21.8 3.9Z"/></clipPath>
<linearGradient id="gOr" x1="0" y1="0" x2="1" y2="0"><stop offset="0" stop-color="#d9691e"/><stop offset="0.5" stop-color="#ee8a2c"/><stop offset="1" stop-color="#d2621c"/></linearGradient>
<linearGradient id="gWh" x1="0" y1="0" x2="1" y2="0"><stop offset="0" stop-color="#b9c0c4"/><stop offset="0.45" stop-color="#e3e7ea"/><stop offset="1" stop-color="#b3babf"/></linearGradient>
<linearGradient id="gBase" x1="0" y1="0" x2="0" y2="1"><stop offset="0" stop-color="#e07a22"/><stop offset="1" stop-color="#f5b63c"/></linearGradient>
<linearGradient id="gHdd" x1="0" y1="0" x2="0" y2="1"><stop offset="0" stop-color="#c6ccd0"/><stop offset="1" stop-color="#8a9196"/></linearGradient>
<linearGradient id="gFolB" x1="0" y1="0" x2="0" y2="1"><stop offset="0" stop-color="#5aa8e4"/><stop offset="1" stop-color="#4f9fe0"/></linearGradient>
<linearGradient id="gFolF" x1="0" y1="0" x2="0" y2="1"><stop offset="0" stop-color="#7ac6f7"/><stop offset="1" stop-color="#6cbbf2"/></linearGradient>
<symbol id="doc" viewBox="0 0 128 128">
<path d="M24.5 6.9 H75.2 L107 38.7 V117.8 Q107 121.3 103.5 121.3 H24.5 Q21 121.3 21 117.8 V10.4 Q21 6.9 24.5 6.9Z" fill="url(#gDoc)"/>
<g clip-path="url(#cDoc)"><path d="M73.2 6.9 L105 40.7 H77.7 Q73.2 40.7 73.2 36.2Z" fill="#000" opacity=".45" filter="url(#fSh)"/></g>
<path d="M75.2 6.9 L107 38.7 H79.7 Q75.2 38.7 75.2 34.2Z" fill="url(#gFold)"/>
</symbol>
<symbol id="txt" viewBox="0 0 128 128">
<path d="M21.8 3.9 H75.7 L109 37.2 V118.2 Q109 122 105.2 122 H21.8 Q18 122 18 118.2 V7.7 Q18 3.9 21.8 3.9Z" fill="url(#gDoc)"/>
<g clip-path="url(#cTxt)"><path d="M73.7 3.9 L107 39.2 H78.2 Q73.7 39.2 73.7 34.7Z" fill="#000" opacity=".45" filter="url(#fSh)"/></g>
<path d="M75.7 3.9 L109 37.2 H80.2 Q75.7 37.2 75.7 32.7Z" fill="url(#gFold)"/>
</symbol>
<symbol id="vlc" viewBox="0 0 128 128">
<path d="M19.4 1.9 H75.5 Q78.4 1.9 80.2 3.9 L105.6 31.4 Q108.8 34.8 108.8 38.5 V120.1 H19.4Z" fill="url(#gPage)"/>
<g clip-path="url(#cVlc)"><path d="M83.3 27 C92 27.5 100 29 105.6 31.4 L110 36 V42 C100 38 92 35 82 33.5Z" fill="#000" opacity=".3" filter="url(#fSh)"/>
<path d="M80.2 4 L83.3 27 L80 28 L77.5 4Z" fill="#000" opacity=".2" filter="url(#fSh2)"/></g>
<path d="M80.2 3.9 C81.6 12 82.5 20 83.3 27 C92 27.4 100 28.8 105.6 31.4Z" fill="url(#gCurl)"/>
<path d="M43.6 71.2 H85.9 L91.8 92.4 Q92 93.8 90.6 93.8 H39 Q37.6 93.8 37.8 92.4Z" fill="url(#gBase)"/>
<path d="M37.8 92.2 H91.8 L91.6 93.4 Q91.5 94.6 90 94.6 H39.4 Q38 94.6 37.9 93.4Z" fill="#c2501a"/>
<path d="M61.3 35.2 Q64.8 32.2 68.3 35.2 L82.4 82.8 Q82.8 88 64.8 88.2 Q46.8 88 47.2 82.8Z" fill="url(#gOr)"/>
<path d="M59.2 42.2 H70.4 L73.9 54 H55.7Z" fill="url(#gWh)"/>
<path d="M52.7 64.4 H76.9 L81 78.4 Q73.5 80.2 64.8 80.2 Q56.1 80.2 48.6 78.4Z" fill="url(#gWh)"/>
</symbol>
<symbol id="hdd" viewBox="0 0 128 128">
<path d="M18.9 1.9 H67.4 C90 1.9 109.1 24 109.1 49.4 V120.1 H18.9Z" fill="url(#gPage2)"/>
<path d="M67.4 1.9 C73 7 75.5 18 76.7 29.4 C92 30 104 38 109.1 49.4 C100 40 88 36.5 78 36 C75 35 73 33 72.5 30 Z" fill="#000" opacity=".22" filter="url(#fSh)"/>
<path d="M67.4 1.9 C73 7 75.5 18 76.7 29.4 C92 30 104 38 109.1 49.4 C109.1 24 90 1.9 67.4 1.9Z" fill="url(#gCurl)"/>
<path d="M40 44.4 H87.4 Q89 44.4 89.3 46 L92.6 92 Q92.6 93.5 91 93.5 H37 Q35.4 93.5 35.4 92 L38.3 46 Q38.5 44.4 40 44.4Z" fill="url(#gHdd)"/>
<path d="M35.4 92 H92.6 V99 Q92.6 100.9 90.7 100.9 H37.3 Q35.4 100.9 35.4 99Z" fill="#6f7579"/>
<path d="M37 93.5 Q64 86 91 93.5 V99 H37Z" fill="#9ba2a6" opacity=".6"/>
<rect x="48.6" y="48.2" width="27" height="6.4" fill="#2a2c2e"/>
<rect x="47.6" y="54.6" width="29" height="1.6" fill="#d0d4d7"/>
<ellipse cx="64" cy="74" rx="21" ry="14.6" fill="none" stroke="#b5bcc0" stroke-width="1"/>
<ellipse cx="64.5" cy="73.2" rx="7.2" ry="4.8" fill="#a3aaae"/>
<g fill="#3a3d40"><circle cx="41.2" cy="47.8" r="0.9"/><circle cx="87" cy="47.8" r="0.9"/><circle cx="39.5" cy="68.4" r="0.9"/><circle cx="88.8" cy="68.4" r="0.9"/><circle cx="37.8" cy="91" r="0.9"/><circle cx="90.4" cy="91" r="0.9"/></g>
<g stroke="#1e2022" stroke-width="1.1"><path d="M67.5 94.2V99.6 M69.6 94.2V99.6 M71.7 94.2V99.6 M73.8 94.2V99.6 M75.9 94.2V99.6 M78 94.2V99.6"/></g>
</symbol>
<symbol id="folder" viewBox="0 0 128 128">
<path d="M11 15.4 H51 Q54 15.4 56.5 17.4 L62 22.3 Q64.5 25 68 25 H117 Q122.8 25 122.8 31 V108.6 Q122.8 114.6 116.8 114.6 H11 Q5 114.6 5 108.6 V21.4 Q5 15.4 11 15.4Z" fill="url(#gFolB)"/>
<path d="M11 31.5 H116.8 Q122.8 31.5 122.8 37.5 V108.6 Q122.8 114.6 116.8 114.6 H11 Q5 114.6 5 108.6 V37.5 Q5 31.5 11 31.5Z" fill="url(#gFolF)"/>
<path d="M5 107 H122.8 V108.6 Q122.8 114.6 116.8 114.6 H11 Q5 114.6 5 108.6Z" fill="#5aaae6"/>
</symbol>
</defs></svg>
<svg class="i" style="left:624px;top:206px" width="128" height="128"><use href="#doc"/></svg>
<div class="t" style="left:566.5px;width:240px;text-align:center;top:352.1px;font-size:24px;color:#dfdedf;"><span style="letter-spacing:0.98px">bcm</span><span style="letter-spacing:1.53px">2708</span><i class="hy"></i><span style="letter-spacing:0.98px">rpi</span><i class="hy"></i><span style="letter-spacing:0.98px">b</span><i class="hy"></i></div>
<div class="t" style="left:566.5px;width:240px;text-align:center;top:384.1px;font-size:24px;color:#dfdedf;"><span style="letter-spacing:0.98px">plus</span><span style="letter-spacing:0.34px">.</span><span style="letter-spacing:0.98px">dt</span><span style="letter-spacing:0.0px">b</span></div>
<svg class="i" style="left:844px;top:206px" width="128" height="128"><use href="#doc"/></svg>
<div class="t" style="left:786.5px;width:240px;text-align:center;top:352.1px;font-size:24px;color:#dfdedf;"><span style="letter-spacing:0.98px">bcm</span><span style="letter-spacing:1.53px">2708</span><i class="hy"></i><span style="letter-spacing:0.98px">rpi</span><i class="hy"></i><span style="letter-spacing:0.98px">b</span><i class="hy"></i></div>
<div class="t" style="left:786.5px;width:240px;text-align:center;top:384.1px;font-size:24px;color:#dfdedf;"><span style="letter-spacing:0.98px">rev</span><span style="letter-spacing:1.53px">1</span><span style="letter-spacing:0.34px">.</span><span style="letter-spacing:0.98px">dt</span><span style="letter-spacing:0.0px">b</span></div>
<svg class="i" style="left:1064px;top:206px" width="128" height="128"><use href="#doc"/></svg>
<div class="t" style="left:1006.5px;width:240px;text-align:center;top:352.1px;font-size:24px;color:#dfdedf;"><span style="letter-spacing:0.98px">bcm</span><span style="letter-spacing:1.53px">2708</span><i class="hy"></i><span style="letter-spacing:0.98px">rpi</span><i class="hy"></i></div>
<div class="t" style="left:1006.5px;width:240px;text-align:center;top:384.1px;font-size:24px;color:#dfdedf;"><span style="letter-spacing:0.98px">b</span><span style="letter-spacing:0.34px">.</span><span style="letter-spacing:0.98px">dt</span><span style="letter-spacing:0.0px">b</span></div>
<svg class="i" style="left:1284px;top:206px" width="128" height="128"><use href="#doc"/></svg>
<div class="t" style="left:1226.5px;width:240px;text-align:center;top:352.1px;font-size:24px;color:#dfdedf;"><span style="letter-spacing:0.98px">bcm</span><span style="letter-spacing:1.53px">2708</span><i class="hy"></i><span style="letter-spacing:0.98px">rpi</span><i class="hy"></i></div>
<div class="t" style="left:1226.5px;width:240px;text-align:center;top:384.1px;font-size:24px;color:#dfdedf;"><span style="letter-spacing:0.98px">cm</span><span style="letter-spacing:0.34px">.</span><span style="letter-spacing:0.98px">dt</span><span style="letter-spacing:0.0px">b</span></div>
<svg class="i" style="left:1504px;top:206px" width="128" height="128"><use href="#doc"/></svg>
<div class="t" style="left:1446.5px;width:240px;text-align:center;top:352.1px;font-size:24px;color:#dfdedf;"><span style="letter-spacing:0.98px">bcm</span><span style="letter-spacing:1.53px">2708</span><i class="hy"></i><span style="letter-spacing:0.98px">rpi</span><i class="hy"></i></div>
<div class="t" style="left:1446.5px;width:240px;text-align:center;top:384.1px;font-size:24px;color:#dfdedf;"><span style="letter-spacing:0.98px">zero</span><i class="hy"></i><span style="letter-spacing:0.98px">w</span><span style="letter-spacing:0.34px">.</span><span style="letter-spacing:0.98px">dt</span><span style="letter-spacing:0.0px">b</span></div>
<svg class="i" style="left:1724px;top:206px" width="128" height="128"><use href="#doc"/></svg>
<div class="t" style="left:1666.5px;width:240px;text-align:center;top:352.1px;font-size:24px;color:#dfdedf;"><span style="letter-spacing:0.98px">bcm</span><span style="letter-spacing:1.53px">2708</span><i class="hy"></i><span style="letter-spacing:0.98px">rpi</span><i class="hy"></i></div>
<div class="t" style="left:1666.5px;width:240px;text-align:center;top:384.1px;font-size:24px;color:#dfdedf;"><span style="letter-spacing:0.98px">zero</span><span style="letter-spacing:0.34px">.</span><span style="letter-spacing:0.98px">dt</span><span style="letter-spacing:0.0px">b</span></div>
<svg class="i" style="left:1944px;top:206px" width="128" height="128"><use href="#doc"/></svg>
<div class="t" style="left:1886.5px;width:240px;text-align:center;top:352.1px;font-size:24px;color:#dfdedf;"><span style="letter-spacing:0.98px">bcm</span><span style="letter-spacing:1.53px">2709</span><i class="hy"></i><span style="letter-spacing:0.98px">rpi</span><i class="hy"></i><span style="letter-spacing:1.53px">2</span><i class="hy"></i></div>
<div class="t" style="left:1886.5px;width:240px;text-align:center;top:384.1px;font-size:24px;color:#dfdedf;"><span style="letter-spacing:0.98px">b</span><span style="letter-spacing:0.34px">.</span><span style="letter-spacing:0.98px">dt</span><span style="letter-spacing:0.0px">b</span></div>
<svg class="i" style="left:2164px;top:206px" width="128" height="128"><use href="#doc"/></svg>
<div class="t" style="left:2106.5px;width:240px;text-align:center;top:352.1px;font-size:24px;color:#dfdedf;"><span style="letter-spacing:0.98px">bcm</span><span style="letter-spacing:1.53px">2709</span><i class="hy"></i><span style="letter-spacing:0.98px">rpi</span><i class="hy"></i></div>
<div class="t" style="left:2106.5px;width:240px;text-align:center;top:384.1px;font-size:24px;color:#dfdedf;"><span style="letter-spacing:0.98px">cm</span><span style="letter-spacing:1.53px">2</span><span style="letter-spacing:0.34px">.</span><span style="letter-spacing:0.98px">dt</span><span style="letter-spacing:0.0px">b</span></div>
<svg class="i" style="left:624px;top:430px" width="128" height="128"><use href="#doc"/></svg>
<div class="t" style="left:566.5px;width:240px;text-align:center;top:576.1px;font-size:24px;color:#dfdedf;"><span style="letter-spacing:0.98px">bcm</span><span style="letter-spacing:1.53px">2710</span><i class="hy"></i><span style="letter-spacing:0.98px">rpi</span><i class="hy"></i><span style="letter-spacing:1.53px">2</span><i class="hy"></i></div>
<div class="t" style="left:566.5px;width:240px;text-align:center;top:608.1px;font-size:24px;color:#dfdedf;"><span style="letter-spacing:0.98px">b</span><span style="letter-spacing:0.34px">.</span><span style="letter-spacing:0.98px">dt</span><span style="letter-spacing:0.0px">b</span></div>
<svg class="i" style="left:844px;top:430px" width="128" height="128"><use href="#doc"/></svg>
<div class="t" style="left:786.5px;width:240px;text-align:center;top:576.1px;font-size:24px;color:#dfdedf;"><span style="letter-spacing:0.98px">bcm</span><span style="letter-spacing:1.53px">2710</span><i class="hy"></i><span style="letter-spacing:0.98px">rpi</span><i class="hy"></i><span style="letter-spacing:1.53px">3</span><i class="hy"></i></div>
<div class="t" style="left:786.5px;width:240px;text-align:center;top:608.1px;font-size:24px;color:#dfdedf;"><span style="letter-spacing:0.98px">b</span><i class="hy"></i><span style="letter-spacing:0.98px">plus</span><span style="letter-spacing:0.34px">.</span><span style="letter-spacing:0.98px">dt</span><span style="letter-spacing:0.0px">b</span></div>
<svg class="i" style="left:1064px;top:430px" width="128" height="128"><use href="#doc"/></svg>
<div class="t" style="left:1006.5px;width:240px;text-align:center;top:576.1px;font-size:24px;color:#dfdedf;"><span style="letter-spacing:0.98px">bcm</span><span style="letter-spacing:1.53px">2710</span><i class="hy"></i><span style="letter-spacing:0.98px">rpi</span><i class="hy"></i><span style="letter-spacing:1.53px">3</span><i class="hy"></i></div>
<div class="t" style="left:1006.5px;width:240px;text-align:center;top:608.1px;font-size:24px;color:#dfdedf;"><span style="letter-spacing:0.98px">b</span><span style="letter-spacing:0.34px">.</span><span style="letter-spacing:0.98px">dt</span><span style="letter-spacing:0.0px">b</span></div>
<svg class="i" style="left:1284px;top:430px" width="128" height="128"><use href="#doc"/></svg>
<div class="t" style="left:1226.5px;width:240px;text-align:center;top:576.1px;font-size:24px;color:#dfdedf;"><span style="letter-spacing:0.98px">bcm</span><span style="letter-spacing:1.53px">2710</span><i class="hy"></i><span style="letter-spacing:0.98px">rpi</span><i class="hy"></i></div>
<div class="t" style="left:1226.5px;width:240px;text-align:center;top:608.1px;font-size:24px;color:#dfdedf;"><span style="letter-spacing:0.98px">cm</span><span style="letter-spacing:1.53px">3</span><span style="letter-spacing:0.34px">.</span><span style="letter-spacing:0.98px">dt</span><span style="letter-spacing:0.0px">b</span></div>
<svg class="i" style="left:1504px;top:430px" width="128" height="128"><use href="#doc"/></svg>
<div class="t" style="left:1446.5px;width:240px;text-align:center;top:576.1px;font-size:24px;color:#dfdedf;"><span style="letter-spacing:0.98px">bcm</span><span style="letter-spacing:1.53px">2710</span><i class="hy"></i><span style="letter-spacing:0.98px">rpi</span><i class="hy"></i></div>
<div class="t" style="left:1446.5px;width:240px;text-align:center;top:608.1px;font-size:24px;color:#dfdedf;"><span style="letter-spacing:0.98px">zero</span><i class="hy"></i><span style="letter-spacing:1.53px">2</span><i class="hy"></i><span style="letter-spacing:0.98px">w</span><span style="letter-spacing:0.34px">.</span><span style="letter-spacing:0.98px">dt</span><span style="letter-spacing:0.0px">b</span></div>
<svg class="i" style="left:1724px;top:430px" width="128" height="128"><use href="#doc"/></svg>
<div class="t" style="left:1666.5px;width:240px;text-align:center;top:576.1px;font-size:24px;color:#dfdedf;"><span style="letter-spacing:0.98px">bcm</span><span style="letter-spacing:1.53px">2710</span><i class="hy"></i><span style="letter-spacing:0.98px">rpi</span><i class="hy"></i></div>
<div class="t" style="left:1666.5px;width:240px;text-align:center;top:608.1px;font-size:24px;color:#dfdedf;"><span style="letter-spacing:0.98px">zero</span><i class="hy"></i><span style="letter-spacing:1.53px">2</span><span style="letter-spacing:0.34px">.</span><span style="letter-spacing:0.98px">dt</span><span style="letter-spacing:0.0px">b</span></div>
<svg class="i" style="left:1944px;top:430px" width="128" height="128"><use href="#doc"/></svg>
<div class="t" style="left:1886.5px;width:240px;text-align:center;top:576.1px;font-size:24px;color:#dfdedf;"><span style="letter-spacing:0.98px">bcm</span><span style="letter-spacing:1.53px">2711</span><i class="hy"></i><span style="letter-spacing:0.98px">rpi</span><i class="hy"></i><span style="letter-spacing:1.53px">4</span><i class="hy"></i></div>
<div class="t" style="left:1886.5px;width:240px;text-align:center;top:608.1px;font-size:24px;color:#dfdedf;"><span style="letter-spacing:0.98px">b</span><span style="letter-spacing:0.34px">.</span><span style="letter-spacing:0.98px">dt</span><span style="letter-spacing:0.0px">b</span></div>
<svg class="i" style="left:2164px;top:430px" width="128" height="128"><use href="#doc"/></svg>
<div class="t" style="left:2106.5px;width:240px;text-align:center;top:576.1px;font-size:24px;color:#dfdedf;"><span style="letter-spacing:0.98px">bcm</span><span style="letter-spacing:1.53px">2711</span><i class="hy"></i></div>
<div class="t" style="left:2106.5px;width:240px;text-align:center;top:608.1px;font-size:24px;color:#dfdedf;"><span style="letter-spacing:0.98px">rpi</span><i class="hy"></i><span style="letter-spacing:1.53px">400</span><span style="letter-spacing:0.34px">.</span><span style="letter-spacing:0.98px">dt</span><span style="letter-spacing:0.0px">b</span></div>
<svg class="i" style="left:624px;top:654px" width="128" height="128"><use href="#doc"/></svg>
<div class="t" style="left:566.5px;width:240px;text-align:center;top:800.1px;font-size:24px;color:#dfdedf;"><span style="letter-spacing:0.98px">bcm</span><span style="letter-spacing:1.53px">2711</span><i class="hy"></i><span style="letter-spacing:0.98px">rpi</span><i class="hy"></i></div>
<div class="t" style="left:566.5px;width:240px;text-align:center;top:832.1px;font-size:24px;color:#dfdedf;"><span style="letter-spacing:0.98px">cm</span><span style="letter-spacing:1.53px">4</span><i class="hy"></i><span style="letter-spacing:0.98px">io</span><span style="letter-spacing:0.34px">.</span><span style="letter-spacing:0.98px">dt</span><span style="letter-spacing:0.0px">b</span></div>
<svg class="i" style="left:844px;top:654px" width="128" height="128"><use href="#doc"/></svg>
<div class="t" style="left:786.5px;width:240px;text-align:center;top:800.1px;font-size:24px;color:#dfdedf;"><span style="letter-spacing:0.98px">bcm</span><span style="letter-spacing:1.53px">2711</span><i class="hy"></i><span style="letter-spacing:0.98px">rpi</span><i class="hy"></i></div>
<div class="t" style="left:786.5px;width:240px;text-align:center;top:832.1px;font-size:24px;color:#dfdedf;"><span style="letter-spacing:0.98px">cm</span><span style="letter-spacing:1.53px">4</span><span style="letter-spacing:0.34px">.</span><span style="letter-spacing:0.98px">dt</span><span style="letter-spacing:0.0px">b</span></div>
<svg class="i" style="left:1064px;top:654px" width="128" height="128"><use href="#doc"/></svg>
<div class="t" style="left:1006.5px;width:240px;text-align:center;top:800.1px;font-size:24px;color:#dfdedf;"><span style="letter-spacing:0.98px">bcm</span><span style="letter-spacing:1.53px">2711</span><i class="hy"></i><span style="letter-spacing:0.98px">rpi</span><i class="hy"></i></div>
<div class="t" style="left:1006.5px;width:240px;text-align:center;top:832.1px;font-size:24px;color:#dfdedf;"><span style="letter-spacing:0.98px">cm</span><span style="letter-spacing:1.53px">4</span><span style="letter-spacing:0.98px">s</span><span style="letter-spacing:0.34px">.</span><span style="letter-spacing:0.98px">dt</span><span style="letter-spacing:0.0px">b</span></div>
<svg class="i" style="left:1284px;top:654px" width="128" height="128"><use href="#doc"/><g><path d="M55.8 7.4 H72.4 V63.5 Q72.4 71.7 64.1 71.7 Q55.8 71.7 55.8 63.5Z" fill="#4a4c4f"/><g stroke="#d9dcde" stroke-width="1.3"><path d="M58.2 10 H62 M66.2 12.5 H70 M58.2 15 H62 M66.2 17.5 H70 M58.2 42 H62.5 M65.7 44.5 H70 M58.2 47 H62.5 M65.7 49.5 H70 M58.2 52 H62.5 M65.7 54.5 H70 M58.2 57 H62.5 M65.7 59.5 H70 M58.2 62 H62.5 M65.7 64.5 H70 M59 67 H62.5 M65.7 68.5 H69"/></g><path d="M60.5 18 Q64.1 14.5 67.7 18 L67.2 40 Q64.1 44.5 61 40Z" fill="#aeb4b8"/><path d="M61.8 20.5 Q64.1 18.5 66.4 20.5 L66.2 30 Q64.1 32 62 30Z" fill="#e4e8ea"/><ellipse cx="64.1" cy="36.5" rx="2.6" ry="2.4" fill="none" stroke="#6e7377" stroke-width="1"/></g><text x="64.2" y="111.7" text-anchor="middle" font-family="Liberation Sans" font-size="17.5" fill="#8a8a8a">BIN</text></svg>
<div class="t" style="left:1226.5px;width:240px;text-align:center;top:800.1px;font-size:24px;color:#dfdedf;"><span style="letter-spacing:0.98px">bootcode</span><span style="letter-spacing:0.34px">.</span><span style="letter-spacing:0.98px">bi</span><span style="letter-spacing:0.0px">n</span></div>
<svg class="i" style="left:1504px;top:654px" width="128" height="128"><use href="#txt"/><g fill="#8a8a8a" opacity="0.45" clip-path="url(#cTxt)"><rect x="24.0" y="9.5" width="6.6" height="0.8"/><rect x="31.7" y="9.5" width="8.1" height="0.8"/><rect x="40.9" y="9.5" width="3.2" height="0.8"/><rect x="45.8" y="9.5" width="9.7" height="0.8"/><rect x="57.6" y="9.5" width="4.6" height="0.8"/><rect x="24.0" y="11.8" width="9.0" height="0.8"/><rect x="35.3" y="11.8" width="6.3" height="0.8"/></g><text x="63.5" y="112" text-anchor="middle" font-family="Liberation Sans" font-size="17" fill="#7a7a7a">TXT</text></svg>
<div class="t" style="left:1446.5px;width:240px;text-align:center;top:800.1px;font-size:24px;color:#dfdedf;"><span style="letter-spacing:0.98px">cmdline</span><span style="letter-spacing:0.34px">.</span><span style="letter-spacing:0.98px">tx</span><span style="letter-spacing:0.0px">t</span></div>
<svg class="i" style="left:1724px;top:654px" width="128" height="128"><use href="#txt"/><g fill="#8a8a8a" opacity="0.7" clip-path="url(#cTxt)"><rect x="24.0" y="9.5" width="9.6" height="0.8"/><rect x="35.1" y="9.5" width="2.4" height="0.8"/><rect x="39.7" y="9.5" width="2.8" height="0.8"/><rect x="44.2" y="9.5" width="9.3" height="0.8"/><rect x="54.8" y="9.5" width="2.7" height="0.8"/><rect x="59.1" y="9.5" width="3.9" height="0.8"/><rect x="64.8" y="9.5" width="2.5" height="0.8"/><rect x="24.0" y="11.8" width="6.7" height="0.8"/><rect x="31.8" y="11.8" width="3.8" height="0.8"/><rect x="37.3" y="11.8" width="3.1" height="0.8"/><rect x="42.0" y="11.8" width="6.3" height="0.8"/><rect x="50.1" y="11.8" width="6.5" height="0.8"/><rect x="58.5" y="11.8" width="2.8" height="0.8"/><rect x="63.1" y="11.8" width="3.5" height="0.8"/><rect x="24.0" y="14.1" width="3.6" height="0.8"/><rect x="29.6" y="14.1" width="5.4" height="0.8"/><rect x="36.5" y="14.1" width="6.7" height="0.8"/><rect x="44.8" y="14.1" width="4.4" height="0.8"/><rect x="51.3" y="14.1" width="7.6" height="0.8"/><rect x="60.2" y="14.1" width="6.6" height="0.8"/><rect x="24.0" y="18.7" width="6.9" height="0.8"/><rect x="32.0" y="18.7" width="6.1" height="0.8"/><rect x="39.3" y="18.7" width="4.7" height="0.8"/><rect x="46.3" y="18.7" width="5.4" height="0.8"/><rect x="54.1" y="18.7" width="2.6" height="0.8"/><rect x="58.5" y="18.7" width="8.3" height="0.8"/><rect x="24.0" y="21.5" width="6.0" height="0.8"/><rect x="32.1" y="21.5" width="2.6" height="0.8"/><rect x="35.8" y="21.5" width="4.2" height="0.8"/><rect x="41.9" y="21.5" width="2.5" height="0.8"/><rect x="46.4" y="21.5" width="4.5" height="0.8"/><rect x="52.7" y="21.5" width="7.4" height="0.8"/><rect x="61.8" y="21.5" width="7.7" height="0.8"/><rect x="24.0" y="26.1" width="3.3" height="0.8"/><rect x="28.5" y="26.1" width="2.5" height="0.8"/><rect x="33.1" y="26.1" width="3.0" height="0.8"/><rect x="37.4" y="26.1" width="5.1" height="0.8"/><rect x="44.8" y="26.1" width="2.6" height="0.8"/><rect x="49.1" y="26.1" width="6.4" height="0.8"/><rect x="57.7" y="26.1" width="8.6" height="0.8"/><rect x="24.0" y="30.7" width="7.5" height="0.8"/><rect x="33.0" y="30.7" width="3.8" height="0.8"/><rect x="38.0" y="30.7" width="3.2" height="0.8"/><rect x="43.1" y="30.7" width="2.1" height="0.8"/><rect x="47.3" y="30.7" width="3.5" height="0.8"/><rect x="52.2" y="30.7" width="3.2" height="0.8"/><rect x="57.1" y="30.7" width="6.9" height="0.8"/><rect x="65.4" y="30.7" width="3.0" height="0.8"/><rect x="24.0" y="33.0" width="9.2" height="0.8"/><rect x="35.3" y="33.0" width="9.0" height="0.8"/><rect x="46.4" y="33.0" width="5.1" height="0.8"/><rect x="53.1" y="33.0" width="2.8" height="0.8"/><rect x="57.8" y="33.0" width="2.5" height="0.8"/><rect x="61.4" y="33.0" width="3.7" height="0.8"/><rect x="66.3" y="33.0" width="4.7" height="0.8"/><rect x="24.0" y="35.3" width="3.2" height="0.8"/><rect x="28.4" y="35.3" width="4.9" height="0.8"/><rect x="34.3" y="35.3" width="9.0" height="0.8"/><rect x="45.2" y="35.3" width="3.2" height="0.8"/><rect x="49.7" y="35.3" width="4.8" height="0.8"/><rect x="56.0" y="35.3" width="3.0" height="0.8"/><rect x="61.2" y="35.3" width="9.9" height="0.8"/><rect x="24.0" y="39.9" width="2.7" height="0.8"/><rect x="27.8" y="39.9" width="4.7" height="0.8"/><rect x="33.9" y="39.9" width="8.6" height="0.8"/><rect x="43.8" y="39.9" width="2.2" height="0.8"/><rect x="48.3" y="39.9" width="6.2" height="0.8"/><rect x="55.7" y="39.9" width="6.3" height="0.8"/><rect x="63.1" y="39.9" width="6.2" height="0.8"/><rect x="24.0" y="42.2" width="8.8" height="0.8"/><rect x="34.5" y="42.2" width="9.3" height="0.8"/><rect x="24.0" y="44.5" width="6.3" height="0.8"/><rect x="32.0" y="44.5" width="7.1" height="0.8"/><rect x="41.0" y="44.5" width="8.3" height="0.8"/><rect x="51.4" y="44.5" width="3.6" height="0.8"/><rect x="56.3" y="44.5" width="5.2" height="0.8"/><rect x="63.6" y="44.5" width="3.6" height="0.8"/><rect x="68.9" y="44.5" width="7.8" height="0.8"/><rect x="24.0" y="49.1" width="3.5" height="0.8"/><rect x="29.4" y="49.1" width="4.8" height="0.8"/><rect x="36.3" y="49.1" width="7.8" height="0.8"/><rect x="45.6" y="49.1" width="9.8" height="0.8"/><rect x="56.5" y="49.1" width="2.8" height="0.8"/><rect x="60.9" y="49.1" width="4.7" height="0.8"/><rect x="24.0" y="51.4" width="9.3" height="0.8"/><rect x="34.8" y="51.4" width="7.1" height="0.8"/><rect x="44.1" y="51.4" width="3.0" height="0.8"/><rect x="48.6" y="51.4" width="7.7" height="0.8"/><rect x="57.5" y="51.4" width="9.1" height="0.8"/><rect x="24.0" y="53.7" width="9.6" height="0.8"/><rect x="35.6" y="53.7" width="5.7" height="0.8"/><rect x="43.3" y="53.7" width="2.7" height="0.8"/><rect x="47.2" y="53.7" width="9.9" height="0.8"/><rect x="58.2" y="53.7" width="6.7" height="0.8"/><rect x="24.0" y="56.0" width="8.6" height="0.8"/><rect x="35.0" y="56.0" width="7.3" height="0.8"/><rect x="43.7" y="56.0" width="6.4" height="0.8"/><rect x="51.3" y="56.0" width="2.1" height="0.8"/><rect x="55.8" y="56.0" width="7.2" height="0.8"/><rect x="64.7" y="56.0" width="9.5" height="0.8"/><rect x="24.0" y="58.3" width="4.0" height="0.8"/><rect x="29.4" y="58.3" width="3.9" height="0.8"/><rect x="35.2" y="58.3" width="4.1" height="0.8"/><rect x="40.8" y="58.3" width="3.0" height="0.8"/><rect x="24.0" y="62.9" width="6.7" height="0.8"/><rect x="32.9" y="62.9" width="5.4" height="0.8"/><rect x="24.0" y="65.2" width="6.1" height="0.8"/><rect x="32.3" y="65.2" width="8.2" height="0.8"/><rect x="42.4" y="65.2" width="8.2" height="0.8"/><rect x="51.8" y="65.2" width="3.1" height="0.8"/><rect x="56.8" y="65.2" width="3.0" height="0.8"/><rect x="60.8" y="65.2" width="7.5" height="0.8"/><rect x="70.0" y="65.2" width="5.9" height="0.8"/><rect x="24.0" y="67.5" width="3.5" height="0.8"/><rect x="28.6" y="67.5" width="2.8" height="0.8"/><rect x="33.0" y="67.5" width="2.2" height="0.8"/><rect x="37.5" y="67.5" width="2.5" height="0.8"/><rect x="41.4" y="67.5" width="9.8" height="0.8"/><rect x="53.1" y="67.5" width="3.6" height="0.8"/><rect x="24.0" y="72.1" width="9.5" height="0.8"/><rect x="35.5" y="72.1" width="9.0" height="0.8"/><rect x="46.8" y="72.1" width="4.1" height="0.8"/><rect x="52.7" y="72.1" width="9.5" height="0.8"/><rect x="64.4" y="72.1" width="3.1" height="0.8"/><rect x="68.7" y="72.1" width="5.5" height="0.8"/><rect x="75.3" y="72.1" width="3.9" height="0.8"/><rect x="24.0" y="74.9" width="3.0" height="0.8"/><rect x="29.1" y="74.9" width="9.5" height="0.8"/><rect x="40.5" y="74.9" width="4.9" height="0.8"/><rect x="46.8" y="74.9" width="3.1" height="0.8"/><rect x="51.5" y="74.9" width="8.0" height="0.8"/><rect x="24.0" y="77.2" width="8.7" height="0.8"/><rect x="33.9" y="77.2" width="5.5" height="0.8"/><rect x="24.0" y="79.5" width="4.5" height="0.8"/><rect x="30.6" y="79.5" width="2.2" height="0.8"/><rect x="34.5" y="79.5" width="5.5" height="0.8"/><rect x="41.0" y="79.5" width="4.7" height="0.8"/><rect x="47.6" y="79.5" width="6.1" height="0.8"/><rect x="54.8" y="79.5" width="9.9" height="0.8"/><rect x="24.0" y="81.8" width="4.1" height="0.8"/><rect x="29.2" y="81.8" width="8.2" height="0.8"/><rect x="38.8" y="81.8" width="3.0" height="0.8"/><rect x="24.0" y="84.6" width="3.2" height="0.8"/><rect x="29.5" y="84.6" width="6.6" height="0.8"/><rect x="38.0" y="84.6" width="2.7" height="0.8"/><rect x="41.8" y="84.6" width="7.5" height="0.8"/><rect x="50.9" y="84.6" width="2.6" height="0.8"/><rect x="55.8" y="84.6" width="7.1" height="0.8"/><rect x="65.0" y="84.6" width="2.7" height="0.8"/><rect x="69.9" y="84.6" width="2.5" height="0.8"/><rect x="24.0" y="89.2" width="4.7" height="0.8"/><rect x="30.5" y="89.2" width="9.4" height="0.8"/><rect x="41.3" y="89.2" width="3.0" height="0.8"/><rect x="46.0" y="89.2" width="3.9" height="0.8"/><rect x="24.0" y="91.5" width="2.4" height="0.8"/><rect x="27.7" y="91.5" width="4.5" height="0.8"/><rect x="33.6" y="91.5" width="8.1" height="0.8"/><rect x="43.1" y="91.5" width="6.0" height="0.8"/><rect x="50.3" y="91.5" width="4.8" height="0.8"/><rect x="56.1" y="91.5" width="4.0" height="0.8"/><rect x="61.2" y="91.5" width="7.9" height="0.8"/><rect x="24.0" y="93.8" width="5.8" height="0.8"/><rect x="32.1" y="93.8" width="2.9" height="0.8"/><rect x="37.1" y="93.8" width="5.5" height="0.8"/><rect x="44.3" y="93.8" width="8.7" height="0.8"/><rect x="54.5" y="93.8" width="6.1" height="0.8"/><rect x="62.5" y="93.8" width="9.9" height="0.8"/><rect x="24.0" y="96.1" width="9.9" height="0.8"/><rect x="36.3" y="96.1" width="8.7" height="0.8"/><rect x="46.0" y="96.1" width="7.0" height="0.8"/><rect x="55.2" y="96.1" width="5.4" height="0.8"/><rect x="61.8" y="96.1" width="7.3" height="0.8"/><rect x="24.0" y="98.9" width="3.9" height="0.8"/><rect x="29.3" y="98.9" width="5.7" height="0.8"/><rect x="36.2" y="98.9" width="5.6" height="0.8"/><rect x="43.2" y="98.9" width="9.7" height="0.8"/><rect x="55.2" y="98.9" width="6.4" height="0.8"/><rect x="63.0" y="98.9" width="9.7" height="0.8"/><rect x="74.1" y="98.9" width="4.9" height="0.8"/><rect x="24.0" y="103.5" width="6.0" height="0.8"/><rect x="31.3" y="103.5" width="6.0" height="0.8"/><rect x="38.3" y="103.5" width="4.1" height="0.8"/><rect x="43.6" y="103.5" width="5.2" height="0.8"/><rect x="49.8" y="103.5" width="2.2" height="0.8"/><rect x="53.4" y="103.5" width="3.9" height="0.8"/><rect x="59.1" y="103.5" width="6.2" height="0.8"/><rect x="24.0" y="108.1" width="4.6" height="0.8"/><rect x="31.0" y="108.1" width="3.2" height="0.8"/><rect x="36.2" y="108.1" width="7.1" height="0.8"/><rect x="44.4" y="108.1" width="8.7" height="0.8"/><rect x="55.3" y="108.1" width="7.0" height="0.8"/><rect x="24.0" y="110.4" width="8.0" height="0.8"/><rect x="33.8" y="110.4" width="8.5" height="0.8"/><rect x="43.3" y="110.4" width="7.5" height="0.8"/><rect x="53.0" y="110.4" width="7.7" height="0.8"/><rect x="63.0" y="110.4" width="7.1" height="0.8"/><rect x="71.2" y="110.4" width="2.3" height="0.8"/></g><text x="70" y="112" text-anchor="middle" font-family="Liberation Sans" font-size="17" fill="#7a7a7a">TXT</text></svg>
<div class="t" style="left:1666.5px;width:240px;text-align:center;top:800.1px;font-size:24px;color:#dfdedf;"><span style="letter-spacing:0.98px">config</span><span style="letter-spacing:0.34px">.</span><span style="letter-spacing:0.98px">tx</span><span style="letter-spacing:0.0px">t</span></div>
<svg class="i" style="left:1944px;top:654px" width="128" height="128"><use href="#doc"/></svg>
<div class="t" style="left:1886.5px;width:240px;text-align:center;top:800.1px;font-size:24px;color:#dfdedf;"><span style="letter-spacing:-0.41px">COPYING</span><span style="letter-spacing:0.34px">.</span><span style="letter-spacing:0.98px">linu</span><span style="letter-spacing:0.0px">x</span></div>
<svg class="i" style="left:2164px;top:654px" width="128" height="128"><use href="#vlc"/></svg>
<div class="t" style="left:2106.5px;width:240px;text-align:center;top:800.1px;font-size:24px;color:#dfdedf;"><span style="letter-spacing:0.98px">fixup</span><span style="letter-spacing:0.34px">_</span><span style="letter-spacing:0.98px">cd</span><span style="letter-spacing:0.34px">.</span><span style="letter-spacing:0.98px">da</span><span style="letter-spacing:0.0px">t</span></div>
<svg class="i" style="left:624px;top:878px" width="128" height="128"><use href="#vlc"/></svg>
<div class="t" style="left:566.5px;width:240px;text-align:center;top:1024.1px;font-size:24px;color:#dfdedf;"><span style="letter-spacing:0.98px">fixup</span><span style="letter-spacing:0.34px">_</span><span style="letter-spacing:0.98px">db</span><span style="letter-spacing:0.34px">.</span><span style="letter-spacing:0.98px">da</span><span style="letter-spacing:0.0px">t</span></div>
<svg class="i" style="left:844px;top:878px" width="128" height="128"><use href="#vlc"/></svg>
<div class="t" style="left:786.5px;width:240px;text-align:center;top:1024.1px;font-size:24px;color:#dfdedf;"><span style="letter-spacing:0.98px">fixup</span><span style="letter-spacing:0.34px">_</span><span style="letter-spacing:0.98px">x</span><span style="letter-spacing:0.34px">.</span><span style="letter-spacing:0.98px">da</span><span style="letter-spacing:0.0px">t</span></div>
<svg class="i" style="left:1064px;top:878px" width="128" height="128"><use href="#vlc"/></svg>
<div class="t" style="left:1006.5px;width:240px;text-align:center;top:1024.1px;font-size:24px;color:#dfdedf;"><span style="letter-spacing:0.98px">fixup</span><span style="letter-spacing:0.34px">.</span><span style="letter-spacing:0.98px">da</span><span style="letter-spacing:0.0px">t</span></div>
<svg class="i" style="left:1284px;top:878px" width="128" height="128"><use href="#vlc"/></svg>
<div class="t" style="left:1226.5px;width:240px;text-align:center;top:1024.1px;font-size:24px;color:#dfdedf;"><span style="letter-spacing:0.98px">fixup</span><span style="letter-spacing:1.53px">4</span><span style="letter-spacing:0.34px">.</span><span style="letter-spacing:0.98px">da</span><span style="letter-spacing:0.0px">t</span></div>
<svg class="i" style="left:1504px;top:878px" width="128" height="128"><use href="#vlc"/></svg>
<div class="t" style="left:1446.5px;width:240px;text-align:center;top:1024.1px;font-size:24px;color:#dfdedf;"><span style="letter-spacing:0.98px">fixup</span><span style="letter-spacing:1.53px">4</span><span style="letter-spacing:0.98px">cd</span><span style="letter-spacing:0.34px">.</span><span style="letter-spacing:0.98px">da</span><span style="letter-spacing:0.0px">t</span></div>
<svg class="i" style="left:1724px;top:878px" width="128" height="128"><use href="#vlc"/></svg>
<div class="t" style="left:1666.5px;width:240px;text-align:center;top:1024.1px;font-size:24px;color:#dfdedf;"><span style="letter-spacing:0.98px">fixup</span><span style="letter-spacing:1.53px">4</span><span style="letter-spacing:0.98px">db</span><span style="letter-spacing:0.34px">.</span><span style="letter-spacing:0.98px">da</span><span style="letter-spacing:0.0px">t</span></div>
<svg class="i" style="left:1944px;top:878px" width="128" height="128"><use href="#vlc"/></svg>
<div class="t" style="left:1886.5px;width:240px;text-align:center;top:1024.1px;font-size:24px;color:#dfdedf;"><span style="letter-spacing:0.98px">fixup</span><span style="letter-spacing:1.53px">4</span><span style="letter-spacing:0.98px">x</span><span style="letter-spacing:0.34px">.</span><span style="letter-spacing:0.98px">da</span><span style="letter-spacing:0.0px">t</span></div>
<svg class="i" style="left:2164px;top:878px" width="128" height="128"><use href="#txt"/><g fill="#8a8a8a" opacity="0.45" clip-path="url(#cTxt)"><rect x="24.0" y="9.5" width="2.3" height="0.8"/><rect x="27.9" y="9.5" width="2.1" height="0.8"/><rect x="31.7" y="9.5" width="5.9" height="0.8"/><rect x="39.0" y="9.5" width="8.5" height="0.8"/><rect x="48.6" y="9.5" width="5.9" height="0.8"/><rect x="55.6" y="9.5" width="9.6" height="0.8"/><rect x="24.0" y="14.1" width="3.1" height="0.8"/><rect x="28.6" y="14.1" width="5.4" height="0.8"/><rect x="36.1" y="14.1" width="4.1" height="0.8"/><rect x="41.5" y="14.1" width="4.4" height="0.8"/><rect x="47.4" y="14.1" width="5.7" height="0.8"/><rect x="55.3" y="14.1" width="3.9" height="0.8"/><rect x="60.8" y="14.1" width="5.0" height="0.8"/></g><text x="63.5" y="112" text-anchor="middle" font-family="Liberation Sans" font-size="17" fill="#7a7a7a">TXT</text></svg>
<div class="t" style="left:2106.5px;width:240px;text-align:center;top:1024.1px;font-size:24px;color:#dfdedf;"><span style="letter-spacing:0.98px">issue</span><span style="letter-spacing:0.34px">.</span><span style="letter-spacing:0.98px">tx</span><span style="letter-spacing:0.0px">t</span></div>
<svg class="i" style="left:624px;top:1102px" width="128" height="128"><use href="#hdd"/></svg>
<div class="t" style="left:566.5px;width:240px;text-align:center;top:1248.1px;font-size:24px;color:#dfdedf;"><span style="letter-spacing:0.98px">kernel</span><span style="letter-spacing:0.34px">.</span><span style="letter-spacing:0.98px">im</span><span style="letter-spacing:0.0px">g</span></div>
<svg class="i" style="left:844px;top:1102px" width="128" height="128"><use href="#hdd"/></svg>
<div class="t" style="left:786.5px;width:240px;text-align:center;top:1248.1px;font-size:24px;color:#dfdedf;"><span style="letter-spacing:0.98px">kernel</span><span style="letter-spacing:1.53px">7</span><span style="letter-spacing:0.34px">.</span><span style="letter-spacing:0.98px">im</span><span style="letter-spacing:0.0px">g</span></div>
<svg class="i" style="left:1064px;top:1102px" width="128" height="128"><use href="#hdd"/></svg>
<div class="t" style="left:1006.5px;width:240px;text-align:center;top:1248.1px;font-size:24px;color:#dfdedf;"><span style="letter-spacing:0.98px">kernel</span><span style="letter-spacing:1.53px">7</span><span style="letter-spacing:0.98px">l</span><span style="letter-spacing:0.34px">.</span><span style="letter-spacing:0.98px">im</span><span style="letter-spacing:0.0px">g</span></div>
<svg class="i" style="left:1284px;top:1102px" width="128" height="128"><use href="#hdd"/></svg>
<div class="t" style="left:1226.5px;width:240px;text-align:center;top:1248.1px;font-size:24px;color:#dfdedf;"><span style="letter-spacing:0.98px">kernel</span><span style="letter-spacing:1.53px">8</span><span style="letter-spacing:0.34px">.</span><span style="letter-spacing:0.98px">im</span><span style="letter-spacing:0.0px">g</span></div>
<svg class="i" style="left:1504px;top:1102px" width="128" height="128"><use href="#doc"/></svg>
<div class="t" style="left:1446.5px;width:240px;text-align:center;top:1248.1px;font-size:24px;color:#dfdedf;"><span style="letter-spacing:-0.41px">LICENCE</span><span style="letter-spacing:0.34px">.</span><span style="letter-spacing:0.98px">broadc</span><span style="letter-spacing:0.0px">o</span></div>
<div class="t" style="left:1446.5px;width:240px;text-align:center;top:1280.1px;font-size:24px;color:#dfdedf;"><span style="letter-spacing:0.0px">m</span></div>
<svg class="i" style="left:1724px;top:1102px" width="128" height="128"><use href="#folder"/></svg>
<div class="t" style="left:1666.5px;width:240px;text-align:center;top:1248.1px;font-size:24px;color:#dfdedf;"><span style="letter-spacing:0.98px">overlay</span><span style="letter-spacing:0.0px">s</span></div>
<svg class="i" style="left:1944px;top:1102px" width="128" height="128"><use href="#doc"/></svg>
<div class="t" style="left:1886.5px;width:240px;text-align:center;top:1248.1px;font-size:24px;color:#dfdedf;"><span style="letter-spacing:0.98px">start</span><span style="letter-spacing:0.34px">_</span><span style="letter-spacing:0.98px">cd</span><span style="letter-spacing:0.34px">.</span><span style="letter-spacing:0.98px">el</span><span style="letter-spacing:0.0px">f</span></div>
<svg class="i" style="left:2164px;top:1102px" width="128" height="128"><use href="#doc"/></svg>
<div class="t" style="left:2106.5px;width:240px;text-align:center;top:1248.1px;font-size:24px;color:#dfdedf;"><span style="letter-spacing:0.98px">start</span><span style="letter-spacing:0.34px">_</span><span style="letter-spacing:0.98px">db</span><span style="letter-spacing:0.34px">.</span><span style="letter-spacing:0.98px">el</span><span style="letter-spacing:0.0px">f</span></div>
<svg class="i" style="left:624px;top:1326px" width="128" height="128"><use href="#doc"/></svg>
<div class="t" style="left:566.5px;width:240px;text-align:center;top:1472.1px;font-size:24px;color:#dfdedf;"><span style="letter-spacing:0.98px">start</span><span style="letter-spacing:0.34px">_</span><span style="letter-spacing:0.98px">x</span><span style="letter-spacing:0.34px">.</span><span style="letter-spacing:0.98px">el</span><span style="letter-spacing:0.0px">f</span></div>
<svg class="i" style="left:844px;top:1326px" width="128" height="128"><use href="#doc"/></svg>
<div class="t" style="left:786.5px;width:240px;text-align:center;top:1472.1px;font-size:24px;color:#dfdedf;"><span style="letter-spacing:0.98px">start</span><span style="letter-spacing:0.34px">.</span><span style="letter-spacing:0.98px">el</span><span style="letter-spacing:0.0px">f</span></div>
<svg class="i" style="left:1064px;top:1326px" width="128" height="128"><use href="#doc"/></svg>
<div class="t" style="left:1006.5px;width:240px;text-align:center;top:1472.1px;font-size:24px;color:#dfdedf;"><span style="letter-spacing:0.98px">start</span><span style="letter-spacing:1.53px">4</span><span style="letter-spacing:0.34px">.</span><span style="letter-spacing:0.98px">el</span><span style="letter-spacing:0.0px">f</span></div>
<svg class="i" style="left:1284px;top:1326px" width="128" height="128"><use href="#doc"/></svg>
<div class="t" style="left:1226.5px;width:240px;text-align:center;top:1472.1px;font-size:24px;color:#dfdedf;"><span style="letter-spacing:0.98px">start</span><span style="letter-spacing:1.53px">4</span><span style="letter-spacing:0.98px">cd</span><span style="letter-spacing:0.34px">.</span><span style="letter-spacing:0.98px">el</span><span style="letter-spacing:0.0px">f</span></div>
<svg class="i" style="left:1504px;top:1326px" width="128" height="128"><use href="#doc"/></svg>
<div class="t" style="left:1446.5px;width:240px;text-align:center;top:1472.1px;font-size:24px;color:#dfdedf;"><span style="letter-spacing:0.98px">start</span><span style="letter-spacing:1.53px">4</span><span style="letter-spacing:0.98px">db</span><span style="letter-spacing:0.34px">.</span><span style="letter-spacing:0.98px">el</span><span style="letter-spacing:0.0px">f</span></div>
<svg class="i" style="left:1724px;top:1326px" width="128" height="128"><use href="#doc"/></svg>
<div class="t" style="left:1666.5px;width:240px;text-align:center;top:1472.1px;font-size:24px;color:#dfdedf;"><span style="letter-spacing:0.98px">start</span><span style="letter-spacing:1.53px">4</span><span style="letter-spacing:0.98px">x</span><span style="letter-spacing:0.34px">.</span><span style="letter-spacing:0.98px">el</span><span style="letter-spacing:0.0px">f</span></div>
</body></html>
